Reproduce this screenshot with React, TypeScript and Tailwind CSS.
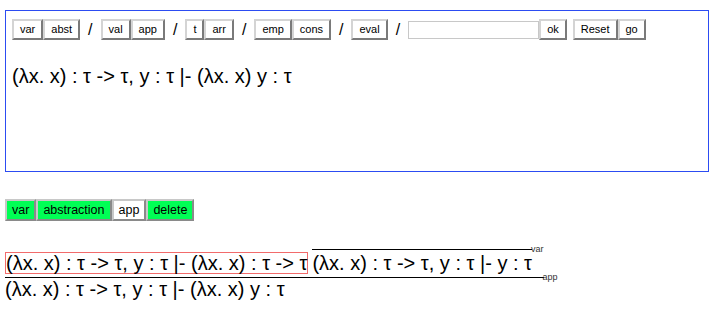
import { ReactNode } from 'react';

const font = { fontFamily: '"Liberation Sans", Arial, sans-serif' };

function Btn({ children }: { children: ReactNode }) {
  return (
    <button className="h-[21px] px-[6px] text-[11px] leading-none text-black bg-white border-2 border-t-[#d4d4d4] border-l-[#d4d4d4] border-b-[#7a7a7a] border-r-[#7a7a7a]">
      {children}
    </button>
  );
}

function ModeBtn({ children, on }: { children: ReactNode; on?: boolean }) {
  return (
    <button
      className={`h-[22px] px-[5px] text-[12.5px] leading-none text-black border-2 border-t-[#c8c8c8] border-l-[#c8c8c8] border-b-[#8a8a8a] border-r-[#8a8a8a] ${on ? 'bg-[#00ff55]' : 'bg-white'}`}
    >
      {children}
    </button>
  );
}

function Slash() {
  return <span className="mx-[8px] text-[16px] leading-none">/</span>;
}

const T = 'τ';

function Rule({ premises, label, conclusion }: { premises?: ReactNode; label: string; conclusion: ReactNode }) {
  return (
    <div className="inline-grid grid-cols-[auto_auto]">
      {premises ? <div className="flex items-end gap-[4px] pb-[3px]">{premises}</div> : <div />}
      <div />
      <div className="h-px bg-black" />
      <span className="h-px flex items-center text-[9px] leading-none text-[#333] -ml-px">{label}</span>
      <div className="whitespace-nowrap">{conclusion}</div>
      <div />
    </div>
  );
}

export default function App() {
  const ctx = `(λx. x) : ${T} -> ${T}, y : ${T} |- `;
  return (
    <div className="pt-[10px] pl-[5px] bg-white min-h-screen text-black" style={font}>
      <div className="w-[704px] h-[162px] border border-[#2c4cf2] pt-[8px] pl-[6px]">
        <div className="flex items-center">
          <Btn>var</Btn><Btn>abst</Btn>
          <Slash />
          <Btn>val</Btn><Btn>app</Btn>
          <Slash />
          <Btn>t</Btn><Btn>arr</Btn>
          <Slash />
          <Btn>emp</Btn><Btn>cons</Btn>
          <Slash />
          <Btn>eval</Btn>
          <Slash />
          <input className="w-[131px] h-[18px] border border-[#c8c8c8] outline-none text-[12px] px-1" />
          <Btn>ok</Btn>
          <span className="w-[6px]" />
          <Btn>Reset</Btn><Btn>go</Btn>
        </div>
        <div className="mt-[25px] text-[20px] leading-[23px] whitespace-nowrap">
          {ctx}(λx. x) y : {T}
        </div>
      </div>

      <div className="mt-[27px] flex">
        <ModeBtn on>var</ModeBtn>
        <ModeBtn on>abstraction</ModeBtn>
        <ModeBtn>app</ModeBtn>
        <ModeBtn on>delete</ModeBtn>
      </div>

      <div className="mt-[28px] text-[20px] leading-[20px]">
        <Rule
          label="app"
          premises={
            <>
              <div className="border border-[#f26b6b] whitespace-nowrap">{ctx}(λx. x) : {T} -&gt; {T}</div>
              <Rule label="var" conclusion={<div className="pt-[3px] pb-px">{ctx}y : {T}</div>} />
            </>
          }
          conclusion={<div className="pt-px">{ctx}(λx. x) y : {T}</div>}
        />
      </div>
    </div>
  );
}
